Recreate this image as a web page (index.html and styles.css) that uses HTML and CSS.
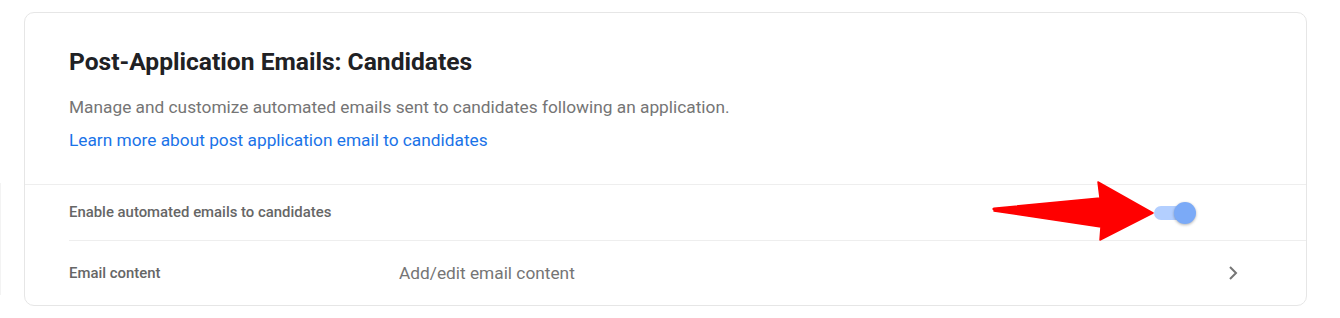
FILE: index.html
```html
<!DOCTYPE html>
<html lang="en">
<head>
<meta charset="utf-8">
<title>Post-Application Emails</title>
<link rel="stylesheet" href="styles.css">
</head>
<body>
<div class="edge"></div>
<section class="card">
  <header class="card-head">
    <h1 class="title">Post-Application Emails: Candidates</h1>
    <p class="desc">Manage and customize automated emails sent to candidates following an application.</p>
    <a class="link" href="#">Learn more about post application email to candidates</a>
  </header>
  <div class="rows">
    <div class="row row-toggle">
      <span class="label">Enable automated emails to candidates</span>
      <span class="toggle"><span class="track"></span><span class="knob"></span></span>
    </div>
    <div class="row row-link">
      <span class="label label-fixed">Email content</span>
      <span class="value">Add/edit email content</span>
      <svg class="chev" width="10" height="16" viewBox="0 0 10 16"><path d="M2 2 L8 8 L2 14" fill="none" stroke="#757575" stroke-width="2"/></svg>
    </div>
  </div>
</section>
<svg class="arrow" width="170" height="66" viewBox="0 0 170 66">
  <path d="M4 28.5 Q2 28 4 27.2 L110 17 L108 1 L163 32 L110 59 L111 46 L4 30 Z" fill="#ff0000" stroke="#ff0000" stroke-width="1.5" stroke-linejoin="round"/>
</svg>
</body>
</html>
```

FILE: styles.css
```css
* { box-sizing: border-box; }
html, body { margin: 0; padding: 0; background: #ffffff; }
body {
  font-family: Roboto, "Noto Sans", "Liberation Sans", sans-serif;
  width: 1340px;
  height: 318px;
  position: relative;
  padding: 12px 33px 0 24px;
}
.edge {
  position: absolute;
  left: 0;
  top: 183px;
  width: 1px;
  height: 112px;
  background: #f3f3f3;
}
.card {
  border: 1px solid #e6e6e6;
  border-radius: 10px;
  height: 294px;
  display: flex;
  flex-direction: column;
  overflow: hidden;
}
.card-head {
  padding: 34px 44px 0 44px;
  height: 172px;
  border-bottom: 1px solid #eeeeee;
}
.title {
  margin: 0;
  font-size: 24.6px;
  font-weight: 700;
  line-height: 30px;
  color: #202124;
}
.desc {
  margin: 19px 0 0 0;
  font-size: 17.3px;
  line-height: 22px;
  color: #757575;
}
.link {
  display: block;
  margin-top: 11px;
  font-size: 17.3px;
  line-height: 22px;
  color: #1a73e8;
  text-decoration: none;
}
.rows {
  padding-left: 44px;
  flex: 1;
  display: flex;
  flex-direction: column;
}
.row {
  display: flex;
  align-items: center;
}
.row-toggle {
  height: 56px;
  border-bottom: 1px solid #eeeeee;
  padding-bottom: 2px;
}
.row-link {
  flex: 1;
}
.label {
  font-size: 14.9px;
  font-weight: 500;
  color: #666666;
}
.label-fixed { width: 330px; }
.value {
  font-size: 17.3px;
  color: #757575;
  flex: 1;
}
.chev { margin-right: 68px; }
.toggle {
  margin-left: auto;
  margin-right: 110px;
  position: relative;
  width: 42px;
  height: 22px;
  display: flex;
  align-items: center;
  margin-top: 2px;
}
.track {
  width: 36px;
  height: 14px;
  border-radius: 7px;
  background: #b3cfff;
}
.knob {
  position: absolute;
  right: 0;
  top: 0;
  width: 22px;
  height: 22px;
  border-radius: 50%;
  background: #7baaf7;
  box-shadow: 0 1px 3px rgba(0,0,0,0.3);
}
.arrow {
  position: absolute;
  left: 990px;
  top: 181px;
}
```
